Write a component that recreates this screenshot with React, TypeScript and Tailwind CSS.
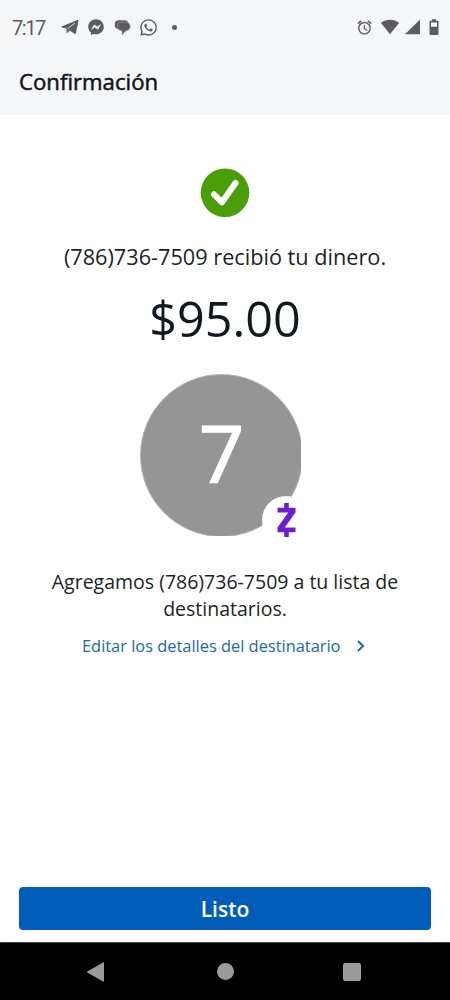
import { FaFacebookMessenger, FaWhatsapp } from "react-icons/fa";
import { MdAlarm } from "react-icons/md";

function TelegramIcon() {
  return (
    <svg width="18" height="16" viewBox="0 0 18 16" fill="currentColor">
      <path d="M.6 7.500 16.400 1c.7-.3 1.200.1 1 .9L14.900 14.200c-.2.8-.7 1-1.400.6L5.600 9.400.6 8.400c-.4-.2-.4-.7 0-.9Z" />
      <path d="M5.600 9v5.500l3-2.500Z" />
      <path d="M6.800 9.600 14 4" stroke="#f5f6f8" strokeWidth=".8" />
    </svg>
  );
}

function ChatIcon() {
  return (
    <svg width="17" height="17" viewBox="0 0 17 17">
      <path fill="#5c5d60" d="M4.500 1.200h6c2 0 3.200.9 3.600 2.300L6 9.800 3.600 10C1.800 9.500.8 8 .8 6.200V4.800C.8 2.600 2.400 1.200 4.500 1.200Z" />
      <path
        fill="#5c5d60"
        stroke="#a5a6a9"
        strokeWidth=".6"
        d="M7 3.200h5c2.500 0 4.200 1.700 4.200 4.200s-1.700 4.200-4.200 4.400L8 16v-4.200C5 11.600 3.300 9.900 3.300 7.500S4.800 3.200 7 3.200Z"
      />
    </svg>
  );
}

function StatusBar() {
  return (
    <div className="flex h-[54px] items-center justify-between pl-3 pr-[11px] text-[#5c5d60]">
      <div className="flex items-center">
        <span className="w-[49px] pt-px font-[Roboto,sans-serif] text-[20px] leading-none tracking-[-1.400px]">7:17</span>
        <TelegramIcon />
        <FaFacebookMessenger className="ml-[9px] size-4" />
        <span className="ml-[10px] mt-px">
          <ChatIcon />
        </span>
        <FaWhatsapp className="ml-2 size-[19px]" />
        <span className="ml-[14px] size-[5px] rounded-full bg-[#5c5d60]" />
      </div>
      <div className="flex items-center">
        <MdAlarm className="size-[17px]" />
        <svg className="ml-2" width="18" height="16" viewBox="0 0 18 16" fill="currentColor">
          <path d="M0 4C5-.2 13-.2 18 4L9 15.200Z" />
        </svg>
        <svg className="ml-[6px]" width="15" height="16" viewBox="0 0 15 16" fill="currentColor">
          <path d="M0 15.300 15 .5v14.800Z" />
        </svg>
        <svg className="ml-[9px]" width="10" height="16" viewBox="0 0 10 16">
          <path fill="currentColor" fillRule="evenodd" d="M3 .3h4v1.500h1.500c.6 0 1 .4 1 1V15c0 .5-.4 1-1 1h-7c-.6 0-1-.5-1-1V2.800c0-.6.400-1 1-1H3ZM2 3.500v4.300h6V3.500Z" />
        </svg>
      </div>
    </div>
  );
}

function Avatar() {
  return (
    <div className="relative ml-[140px] mt-[26px] h-[162px] w-[161px]">
      <div className="size-full overflow-hidden">
        <div className="flex size-[163px] items-center justify-center rounded-full border border-[#b5b5b5] bg-[#959595]">
          <span className="pb-2 font-[Open_Sans,sans-serif] text-[79px] leading-none text-white [-webkit-text-stroke:1.5px_white]">7</span>
        </div>
      </div>
      <div className="absolute left-[122px] top-[122px] flex size-12 items-center justify-center rounded-full bg-white">
        <svg width="19" height="34" viewBox="0 0 19 34" fill="#6b1fd0">
          <path d="M7.200 0h4.600v4.700H18.500v4.800L7.800 24.500h10.700v4.800h-6.700V34H7.200v-4.700H.5v-4.800L11.200 9.500H.5V4.700h6.700Z" />
        </svg>
      </div>
    </div>
  );
}

export default function App() {
  return (
    <div className="flex h-[1000px] w-[450px] flex-col bg-white font-[Open_Sans,sans-serif] text-[#1b1f26]">
      <header className="h-[115px] bg-[#f5f6f8]">
        <StatusBar />
        <h1 className="pl-[19px] pt-[13px] text-[22.200px] leading-[30px] text-[#10141b] [-webkit-text-stroke:0.5px_#10141b]">
          Confirmación
        </h1>
      </header>

      <main className="flex flex-1 flex-col">
        <svg className="ml-[200px] mt-[53px]" width="50" height="50" viewBox="0 0 50 50" fill="none">
          <circle cx="25" cy="24.700" r="24.300" fill="#489f07" />
          <path d="M14 26.300 22 34.300 35.500 15" stroke="white" strokeWidth="6" strokeLinecap="round" strokeLinejoin="round" />
        </svg>
        <p className="mt-6 text-center text-[21.700px] leading-[30px]">(786)736-7509 recibió tu dinero.</p>
        <p className="mt-4 text-center text-[48.500px] leading-[60px] text-[#111820]">$95.00</p>
        <Avatar />
        <p className="mt-8 px-10 text-center text-[19.500px] leading-[27px]">
          Agregamos (786)736-7509 a tu lista de destinatarios.
        </p>
        <a className="ml-[82px] mt-3 flex items-center text-[16.400px] leading-6 text-[#2168a9]">
          Editar los detalles del destinatario
          <svg className="ml-[17px]" width="8" height="12" viewBox="0 0 8 12" fill="none" stroke="currentColor" strokeWidth="2">
            <path d="M1 1 6 6 1 11" />
          </svg>
        </a>
        <button className="mx-[19px] mb-3 mt-auto h-[43px] rounded bg-[#005eb8] pt-0.5 text-[21px] font-semibold text-white">
          Listo
        </button>
      </main>

      <nav className="flex h-[58px] items-center border-t border-[#444] bg-black">
        <svg className="ml-[87px]" width="18" height="20" viewBox="0 0 18 20" fill="#9b9b9b">
          <path d="M.6 9.200 16 .4c.5-.3 1 0 1 .6v18c0 .6-.5.900-1 .6L.6 10.800c-.6-.4-.6-1.200 0-1.600Z" />
        </svg>
        <span className="ml-[111.500px] size-[17px] rounded-full bg-[#9b9b9b]" />
        <span className="ml-[109.500px] size-[18px] rounded-[2px] bg-[#9b9b9b]" />
      </nav>
    </div>
  );
}
